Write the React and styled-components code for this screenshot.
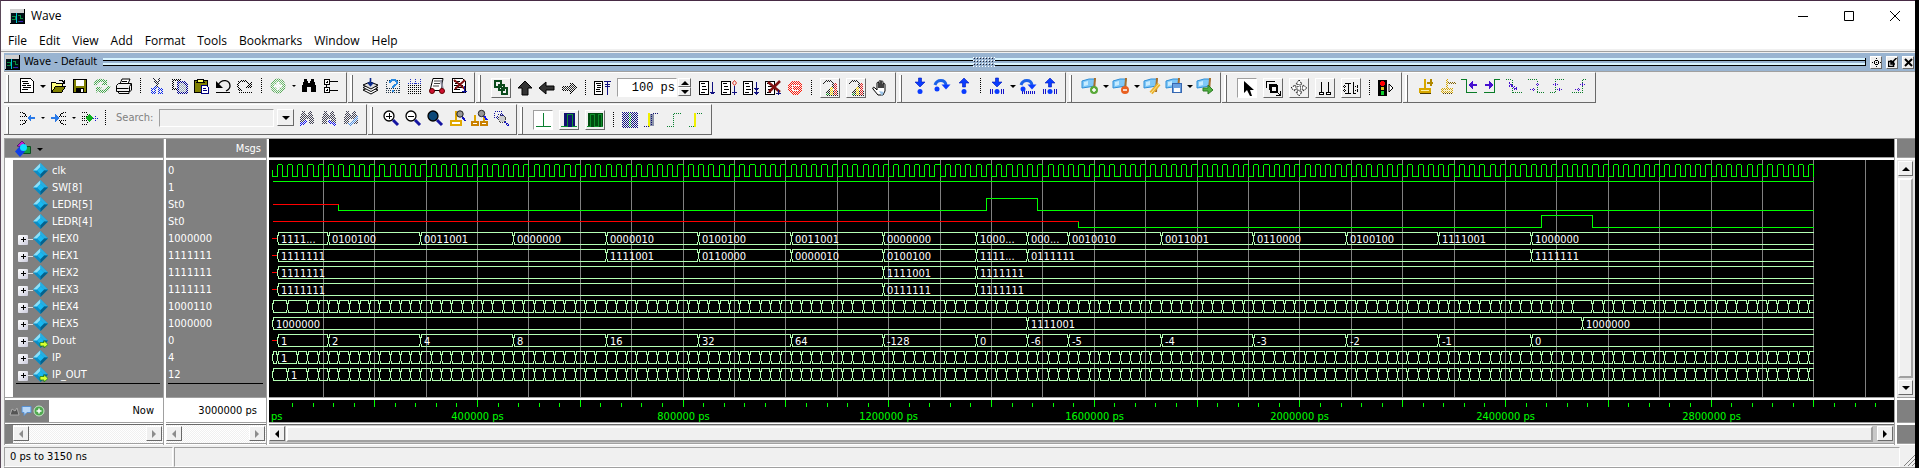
import React from "react";
import styled, { createGlobalStyle } from "styled-components";

const GREY = "#808080";
const EDGE = "#a0a0a0";
const SHADOW = "#696969";
const FACE = "#f0f0f0";
const UI = `"DejaVu Sans Condensed", "DejaVu Sans", sans-serif`;
const MENU = `"Open Sans", "Noto Sans", sans-serif`;

const Global = createGlobalStyle`
  * { box-sizing: border-box; }
  body { margin: 0; background: #000; font-family: ${UI}; font-size: 11px; line-height: 16px; color: #000; }
  button, input { font: inherit; color: inherit; padding: 0; margin: 0; border: 0; border-radius: 0; }
  button { display: flex; align-items: center; justify-content: center; background: none; }
  ul { margin: 0; padding: 0; list-style: none; }
  svg { display: block; }
`;

/* ---------- window frame ---------- */

const Frame = styled.div`
  margin-right: 4px;
  background: ${FACE};
  border-top: 1px solid #472b45;
  border-left: 1px solid #5b4a5a;
  border-bottom: 1px solid ${SHADOW};
`;
const TitleBar = styled.header`
  display: flex;
  align-items: center;
  gap: 6px;
  height: 30px;
  padding-left: 9px;
  background: #fff;
  font: 12px/16px ${MENU};
`;
const Title = styled.h1`
  margin: 0 auto 0 0;
  font: inherit;
`;
const WindowButton = styled.button`
  width: 40px;
  height: 28px;
`;
const MenuBar = styled.nav`
  display: flex;
  height: 18px;
  padding-left: 1px;
  background: #fff;
`;
const MenuItem = styled.button`
  padding: 2px 6px 0;
  font: 12px/18px ${MENU};
`;
const Dock = styled.main`
  margin-top: 2px;
  padding: 1px 0 0 3px;
  border-top: 1px solid ${EDGE};
`;
const Caption = styled.div`
  display: flex;
  align-items: center;
  height: 19px;
  padding: 0 1px;
  background: #99b4d1;
  border-bottom: 1px solid ${EDGE};
`;
const CaptionTitle = styled.h2`
  margin: 0 6px 0 4px;
  font: 11px/16px ${UI};
`;
const Groove = styled.div`
  display: flex;
  flex: 1;
  align-items: center;
  justify-content: center;
  height: 8px;
  border-right: 1px solid #000;
  background: linear-gradient(
    #d8f4ff 0 2px, #000 2px 3px, #99b4d1 3px 5px, #d8f4ff 5px 7px, #000 7px 8px
  );
`;
const GrooveGrip = styled.span`
  width: 22px;
  height: 10px;
  background:
    conic-gradient(at 1px 1px, #99b4d1 75%, #fff 0) 0 0 / 4px 4px,
    #99b4d1;
  background:
    linear-gradient(#fff, #fff) 0 0 / 1px 1px,
    #99b4d1;
  background:
    conic-gradient(at 1px 1px, transparent 75%, #fff 0) 0 0 / 3px 3px,
    conic-gradient(at 1px 1px, transparent 75%, #223 0) 1px 1px / 3px 3px,
    #99b4d1;
`;
const CaptionButton = styled.button`
  width: 12px;
  height: 13px;
  margin-left: 4px;
  background: ${FACE};
  border: solid;
  border-width: 1px;
  border-color: #fff ${SHADOW} ${SHADOW} #fff;
`;

/* ---------- toolbars ---------- */

const ToolRow = styled.div`
  display: flex;
  gap: 1px;
  margin-top: 1px;
  &:first-of-type { margin-top: 0; }
`;
const Tools = styled.div`
  display: flex;
  align-items: center;
  height: 31px;
  padding: 0 4px ${(p) => (p.$tall ? 0 : 3)}px 12px;
  border-top: 1px solid #fff;
  border-right: 1px solid ${SHADOW};
  border-bottom: 1px solid ${SHADOW};
  background:
    linear-gradient(#fff, #fff) 2px 2px / 2px 26px no-repeat,
    linear-gradient(${SHADOW}, ${SHADOW}) 4px 2px / 1px 27px no-repeat;
`;
const Tool = styled.button`
  flex: none;
  width: 22px;
  height: 22px;
`;
const RaisedTool = styled.button`
  flex: none;
  width: 20px;
  height: 20px;
  margin: 0 3px;
  border: 1px solid;
  border-color: ${(p) => (p.$on ? `${EDGE} #fff #fff ${EDGE}` : `#fff ${SHADOW} ${SHADOW} #fff`)};
  background: ${(p) => (p.$on ? "#fff" : FACE)};
`;
const DropTool = styled.button`
  width: 9px;
  height: 22px;
  &::after {
    content: "";
    border: solid transparent;
    border-width: ${(p) => (p.disabled ? "2px 2px 0" : "3px 3px 0")};
    border-top-color: #000;
  }
`;
const Divider = styled.span`
  width: 1px;
  height: 16px;
  margin: 0 5px;
  background: repeating-linear-gradient(#000 0 1px, transparent 1px 2px);
`;
const SearchLabel = styled.label`
  margin-left: 5px;
  color: #808080;
  font-size: 11px;
`;
const SearchBox = styled.div`
  display: flex;
  justify-content: space-between;
  width: 135px;
  margin: 0 2px 0 6px;
`;
const SearchInput = styled.input`
  width: 115px;
  height: 18px;
  background: ${FACE};
  border: 1px solid;
  border-color: ${EDGE} #fff #fff ${EDGE};
`;
const SearchDrop = styled.button`
  width: 17px;
  height: 17px;
  border: 1px solid;
  border-color: #fff ${SHADOW} ${SHADOW} #fff;
`;
const TimeBox = styled.div`
  display: flex;
  gap: 1px;
  margin: 0 5px 0 4px;
`;
const TimeInput = styled.input`
  width: 60px;
  height: 19px;
  padding-right: 1px;
  text-align: right;
  font: 12px "Liberation Mono", monospace;
  background: #fff;
  border: 1px solid;
  border-color: ${EDGE} #fff #fff ${EDGE};
`;
const Spinner = styled.div`
  display: flex;
  flex-direction: column;
`;
const SpinButton = styled.button`
  width: 13px;
  height: 9px;
  border: 1px solid;
  border-color: #fff ${SHADOW} ${SHADOW} #fff;
`;
const Arrow = styled.span`
  border: 4px solid transparent;
  ${(p) => p.$up && "border-top-width: 0; border-bottom-color: currentColor;"}
  ${(p) => p.$down && "border-bottom-width: 0; border-top-color: currentColor;"}
  ${(p) => p.$left && "border-left-width: 0; border-right-color: currentColor;"}
  ${(p) => p.$right && "border-right-width: 0; border-left-color: currentColor;"}
`;

/* ---------- wave panes ---------- */

const Panes = styled.section`
  display: flex;
  margin-top: 3px;
  border-top: 1px solid ${EDGE};
  border-left: 1px solid ${EDGE};
  background: #fff;
`;
const Pane = styled.div`
  display: flex;
  flex-direction: column;
  flex: ${(p) => (p.$w ? `0 0 ${p.$w}px` : "1 1 0")};
  min-width: 0;
  border-right: ${(p) => (p.$last ? 0 : 1)}px solid ${EDGE};
  margin-right: ${(p) => (p.$last ? 0 : 2)}px;
`;
const Cell = styled.div`
  display: flex;
  align-items: center;
  height: ${(p) => p.$h}px;
  margin-bottom: 2px;
  background: ${(p) => p.$bg || GREY};
  box-shadow: 0 1px 0 ${EDGE};
  & + & { margin-top: 1px; }
  color: ${(p) => p.$fg || "#fff"};
  justify-content: ${(p) => (p.$end ? "flex-end" : "flex-start")};
  padding: ${(p) => p.$top || 0}px ${(p) => p.$end || 0}px 0 0;
`;
const Body = styled.div`
  height: 237px;
  margin: 1px 0 3px;
  padding: ${(p) => (p.$flush ? 0 : `2px 3px 0 ${p.$pad}px`)};
  border-left: ${(p) => p.$gutter || 0}px solid #fff;
  background: ${(p) => (p.$flush ? "#000" : GREY)};
  color: #fff;
  box-shadow: 0 1px 0 ${EDGE};
`;
const SignalList = styled.ul`
  border-bottom: 1px solid #000;
`;
const Signal = styled.li`
  display: flex;
  align-items: center;
  height: 17px;
  white-space: nowrap;
`;
const Expander = styled.button`
  width: 10px;
  height: 10px;
  margin: 2px 0 0 2px;
  background: linear-gradient(135deg, #fff, #ccd);
  border-radius: 1px;
`;
const Stem = styled.span`
  width: 5px;
  height: 1px;
  margin: 2px 0 0 0;
  background: ${(p) => (p.$blank ? "transparent" : "#ddd")};
`;
const Blank = styled.span`
  width: 12px;
`;
const SignalName = styled.span`
  margin-left: 4px;
`;
const NowIcons = styled.div`
  display: flex;
  align-items: center;
  justify-content: center;
  align-self: stretch;
  width: 44px;
  margin-right: auto;
  background: ${GREY};
`;
const HScroll = styled.div`
  display: flex;
  height: 20px;
  padding: 1px 1px 1px 0;
  border-top: 1px solid ${SHADOW};
  border-bottom: 1px solid ${EDGE};
  border-left: ${(p) => p.$gutter || 0}px solid ${GREY};
  background: ${(p) => (p.$idle ? "repeating-conic-gradient(#fff 0 25%, #f0f0f0 0 50%) 0 0 / 2px 2px" : "#c8c8c8")};
`;
const ScrollButton = styled.button`
  flex: none;
  width: 16px;
  height: 15px;
  color: ${(p) => (p.disabled ? "#8c8c8c" : "#000")};
  background: ${FACE};
  border: 1px solid;
  border-color: #fff ${SHADOW} ${SHADOW} #fff;
`;
const Thumb = styled.div`
  flex: 1;
  margin: ${(p) => (p.$v ? "2px 0" : "0 4px 0 1px")};
  background: ${(p) => (p.$clear ? "none" : FACE)};
  border: ${(p) => (p.$clear ? 0 : 2)}px solid;
  border-color: #fff ${EDGE} ${EDGE} #fff;
`;
const VScroll = styled.div`
  display: flex;
  flex-direction: column;
  align-items: stretch;
  height: 237px;
  margin: 1px 0 3px;
  padding: 1px 2px 2px 1px;
  background: #e3e3e3;
  box-shadow: 0 1px 0 ${EDGE};
  button { width: auto; }
`;
const StatusBar = styled.footer`
  display: flex;
  gap: 1px;
  height: 21px;
  margin-top: 2px;
  border-bottom: 1px solid ${EDGE};
`;
const StatusCell = styled.div`
  flex: ${(p) => (p.$w ? `0 0 ${p.$w}px` : "1")};
  padding: 1px 0 0 5px;
  border: 1px solid;
  border-color: ${EDGE} #fff #fff ${EDGE};
`;

/* ---------- icons ---------- */

const Glyph = ({ name, dim }) => (
  <svg width="18" height="18" viewBox="1 1 18 18" shapeRendering="crispEdges" fill="none" aria-hidden="true">
    <g mask={dim ? "url(#stipple)" : undefined}>{glyphs[name]}</g>
  </svg>
);

const Defs = styled.svg`
  position: absolute;
`;
const Stipple = () => (
  <Defs width="0" height="0" aria-hidden="true">
    <defs>
      <pattern id="checks" width="2" height="2" patternUnits="userSpaceOnUse">
        <rect width="1" height="1" fill="#fff" />
        <rect x="1" y="1" width="1" height="1" fill="#fff" />
      </pattern>
      <mask id="stipple" maskUnits="userSpaceOnUse" x="0" y="0" width="20" height="20">
        <rect width="20" height="20" fill="url(#checks)" />
      </mask>
    </defs>
  </Defs>
);

const page = (
  <>
    <path d="M3.500 2.500h10l3 3v11h-13z" fill="#fff" stroke="#000" />
    <path d="M5 5.500h6M6 7.500h6M5 9.500h4M10 9.500h4M6 11.500h8M5 13.500h6" stroke="#000" />
  </>
);
const magnifier = (fill) => (
  <>
    <path d="M12 12l5 5" stroke="#1414a0" strokeWidth="3" shapeRendering="auto" />
    <circle cx="8" cy="8" r="5" fill={fill} stroke="#000" strokeWidth="1.3" shapeRendering="auto" />
  </>
);
const binoculars = (c) => (
  <path fill={c} d="M5 3h3v2h1v2h2V5h1V3h3v3h1v3h1v7h-5v-5H8v5H3V9h1V6h1z" />
);
const flag = (
  <g shapeRendering="auto">
    <path d="M2 5l7-2 6 0-1 7-5 1-7 1z" fill="#7fc8f8" stroke="#2f8fd8" />
    <path d="M4 6l4-1v4l-4 1z" fill="#c9ecff" />
    <path d="M15 2l-1 14" stroke="#a8702c" strokeWidth="2" />
  </g>
);
const downArrow = (y) => (
  <g shapeRendering="auto" fill="#0a3cff" stroke="#0016b8" strokeWidth=".6">
    <path d={`M8.500 ${y}h3v4h3.500l-5 5-5-5h3.500z`} />
  </g>
);
const overArrow = (
  <g shapeRendering="auto">
    <path d="M3 9c2-6 10-6 11 0" stroke="#1b62e8" strokeWidth="3" />
    <path d="M9.500 8.500h9l-4.500 5z" fill="#0a3cff" />
    <circle cx="5" cy="13" r="2.500" fill="#0a3cff" />
  </g>
);
const upArrow = (y) => (
  <path d={`M8.500 ${y + 9}h3v-4h3.500l-5-5-5 5h3.500z`} fill="#0a3cff" stroke="#0016b8" strokeWidth=".6" shapeRendering="auto" />
);
const comb = <path d="M3.500 13v5M5.500 13v5M14.500 13v5M16.500 13v5" stroke="#1414c8" />;
const dot = <circle cx="10" cy="15.500" r="2.500" fill="#0a3cff" shapeRendering="auto" />;
const cursorBase = (s) => (
  <>
    <path d="M8 3h2v9H8z" fill={s} />
    <path d="M3.500 12.500h10v3h-10z" fill="#fff0a0" stroke={s} strokeWidth="2" />
    <path d="M4 17.500h11" stroke="#503c00" />
  </>
);
const blueHead = "#4610d0";

const glyphs = {
  new: page,
  open: (
    <>
      <path d="M3.500 15.500v-9h4l1 1h6v3" fill="#ffff80" stroke="#000" />
      <path d="M3.500 16.500l4-6h10l-4 6z" fill="#808000" stroke="#000" />
      <path d="M11 4.500h3l2 2M16.500 4v4M14 7.500h3" stroke="#000" />
    </>
  ),
  save: (
    <>
      <path d="M3.500 3.500h13v13h-13z" fill="#808000" stroke="#000" />
      <path d="M6 4h8v6H6z" fill="#fff" />
      <path d="M6 12h8v5H6z" fill="#000" />
      <path d="M11 13h2v3h-2z" fill="#fff" />
    </>
  ),
  reload: (
    <g shapeRendering="auto">
      <path d="M3 9c1-5 7-6 10-3" stroke="#3fa648" strokeWidth="3" />
      <path d="M15 3v6H9z" fill="#3fa648" />
      <path d="M17 10c-1 5-7 7-10 4" stroke="#3fa648" strokeWidth="3" />
      <path d="M4 17v-6h6z" fill="#3fa648" />
    </g>
  ),
  print: (
    <g shapeRendering="auto" stroke="#000">
      <path d="M6 8l2-5h8l-2 5" fill="#fff" />
      <path d="M2.500 9.500l2-2h13l-2 3v5h-13z" fill="#eee" />
      <path d="M2.500 12.500h12M4 15.500h11v2H5zM17.500 8v6l-2 2M8 5.500h5" />
    </g>
  ),
  cut: (
    <>
      <path d="M7 2l4 9M13 2L9 11" stroke="#223" strokeWidth="2" />
      <path d="M5 13h3v4H5zM12 13h3v4h-3zM9 11l-3 3M11 11l3 3" stroke="#0a2af0" strokeWidth="2" />
    </>
  ),
  copy: (
    <>
      <path d="M3.500 3.500h7v9h-7z" stroke="#000" strokeWidth="2" />
      <path d="M9 6h6l3 3v8H9z" fill="#9ab" stroke="#000090" strokeWidth="2" />
    </>
  ),
  paste: (
    <>
      <path d="M3 4h13v12H3z" fill="#808000" stroke="#000" />
      <path d="M6 6l1-3h5l1 3z" fill="#ffff60" stroke="#000" />
      <path d="M10.500 9.500h5l2 2v6h-7z" fill="#fff" stroke="#000080" />
      <path d="M12 12.500h3M12 14.500h4" stroke="#000080" />
    </>
  ),
  undo: (
    <g shapeRendering="auto">
      <path d="M5 9c4-7 12-5 12 1 0 3-2 4-4 5" stroke="#000" strokeWidth="1.300" />
      <path d="M3 5v7h7z" fill="#000" />
      <path d="M3 16.500h14" stroke="#000" />
    </g>
  ),
  redo: (
    <>
      <path d="M15 9C11 2 3 4 3 10c0 3 2 4 4 5" stroke="#000" strokeWidth="2" />
      <path d="M17 5v7h-7z" fill="#000" />
      <path d="M3 16.500h14" stroke="#000" />
    </>
  ),
  addGreen: (
    <g shapeRendering="auto">
      <circle cx="10" cy="10" r="7" fill="#6fc070" stroke="#3a9a3c" />
      <path d="M10 6v8M6 10h8" stroke="#fff" strokeWidth="3" />
    </g>
  ),
  find: binoculars("#000"),
  tree: (
    <>
      <path d="M3.500 3.500h5v5h-5zM3.500 11.500h5v5h-5z" fill="#fff" stroke="#000" />
      <path d="M5 6h2M6 5v2M5 14h2M6 13v2M9 5.500h8M9 14.500h8M5.500 9v3" stroke="#000" />
    </>
  ),
  compile: (
    <g shapeRendering="auto" stroke="#000">
      <path d="M2 14l7-3 8 3-7 4z" fill="#fff" />
      <path d="M2 11.500l7-3 8 3-7 4z" fill="#fff" />
      <path d="M2 9l7-3 8 3-7 4z" fill="#ddd" />
      <path d="M9.500 2v7M7 6.500l2.500 3 2.500-3" stroke="#0a2a90" strokeWidth="1.600" />
    </g>
  ),
  compileAsk: (
    <>
      <path d="M3.500 4.500h13v12h-13z" stroke="#234" strokeDasharray="1 1" />
      <path d="M5 14.500h11M4 12.500h12" stroke="#234" strokeDasharray="1 1" />
      <path d="M7 7c0-4 7-4 7 0 0 2-4 2-4 5M10 14v2" stroke="#2a8ae0" strokeWidth="2" />
    </>
  ),
  compileAll: (
    <>
      <path d="M3 9.500h14M3 11.500h14M3 13.500h14M3 15.500h14M3 17.500h14" stroke="#000" strokeDasharray="1 1" />
      <path d="M5.500 3v6M10.500 3v6M15.500 3v6M3 7.500h14" stroke="#2030c0" strokeDasharray="1 1" />
    </>
  ),
  simulate: (
    <g shapeRendering="auto">
      <path d="M6 2.500h10l-2 12H3z" fill="#fff" stroke="#000" />
      <path d="M7 5h6M7 7.500h6M6 10h6" stroke="#444" />
      <path d="M14 4l2 11" stroke="#889" strokeWidth="2" />
      <circle cx="5" cy="15" r="2.500" fill="#d01030" stroke="#600" />
      <circle cx="15" cy="15" r="2.500" fill="#d01030" stroke="#600" />
    </g>
  ),
  endSim: (
    <>
      {page}
      <path d="M5 4l11 9M16 4L6 13" stroke="#801010" strokeWidth="2" shapeRendering="auto" />
      <path d="M15.500 10v7M13 15.500h5" stroke="#1414a0" />
    </>
  ),
  hierarchy: (
    <path d="M4 3h6v6H4zM8 7h5v5H8zM11 10h5v6h-5z" stroke="#0a4a1c" strokeWidth="2" />
  ),
  up: <path d="M10 3l7 7h-4v7H7v-7H3z" fill="#333" stroke="#000" shapeRendering="auto" />,
  left: <path d="M2 10l7-6v4h8v4H9v4z" fill="#333" stroke="#000" shapeRendering="auto" />,
  right: <path d="M18 10l-7-6v4H3v4h8v4z" fill="#333" stroke="#000" />,
  restart: (
    <>
      <path d="M2.500 3.500h8v13h-8z" fill="#fff" stroke="#000" />
      <path d="M4 5.500h5M5 7.500h4M5 9.500h4M4 11.500h4M4 13.500h5" stroke="#000" />
      <path d="M15.500 4v13M12 3.500h7M13 6.500h5M13 8.500h5" stroke="#101080" />
    </>
  ),
  run: (
    <>
      <path d="M2.500 3.500h9v13h-9z" fill="#fff" stroke="#000" />
      <path d="M4 5.500h4M5 8.500h4M5 11.500h5M4 14.500h4" stroke="#000" />
      <path d="M15.500 4v12M13 14.500h5M14 15.500h3" stroke="#101080" />
    </>
  ),
  runDiamond: (
    <>
      <path d="M2.500 3.500h9v13h-9z" fill="#fff" stroke="#000" />
      <path d="M4 5.500h4M5 8.500h4M5 11.500h5M4 14.500h4" stroke="#000" />
      <path d="M15.500 8v9M13 14.500h5" stroke="#101080" />
      <path d="M15.500 2.500l2 2.500-2 2.500-2-2.500z" stroke="#e03020" shapeRendering="auto" />
    </>
  ),
  runAll: (
    <>
      <path d="M2.500 3.500h9v13h-9z" fill="#fff" stroke="#000" />
      <path d="M4 5.500h4M5 8.500h4M5 11.500h5M4 14.500h4" stroke="#000" />
      <path d="M15.500 4v13M13 10.500h5M13 14.500h5M14 11.500h3M14 15.500h3" stroke="#101080" />
    </>
  ),
  breakRun: (
    <>
      <path d="M2.500 3.500h9v13h-9z" fill="#fff" stroke="#000" />
      <path d="M4 5.500h4M5 8.500h4M5 11.500h5M4 14.500h4" stroke="#000" />
      <path d="M5 4l12 10M17 3L6 14" stroke="#801010" strokeWidth="2.500" shapeRendering="auto" />
      <path d="M15.500 12v5M13 15.500h5" stroke="#101080" />
    </>
  ),
  stop: (
    <>
      <path d="M7 3h7l3 4v6l-3 4H7l-4-4V7z" fill="#ff1808" />
      <path d="M7 7.500h7M7 12.500h7M7 8v4" stroke="#fff" />
    </>
  ),
  profile: (
    <>
      <path d="M3 6l3-3h5l3 4-3 5H8" stroke="#222" strokeWidth="2" />
      <path d="M6 13h12v5H6z" fill="#222" />
      <path d="M10 9h3v8h-3z" fill="#f0d000" />
      <path d="M14 5h3v12h-3z" fill="#e02020" />
      <path d="M6 15h3v2H6z" fill="#10a020" />
    </>
  ),
  hand: (
    <g shapeRendering="auto">
      <path d="M8 17l-5-6c-1-2 1-2 2-1l2 2V5c0-1 2-1 2 0v5V4c0-2 2-2 2 0v6V4c0-2 2-1 2 0v6V6c1-1 2-1 2 1v6l-2 4z" fill="#fff" stroke="#000" />
      <path d="M9 13l5 1-2 4z" fill="#9cc4e8" />
    </g>
  ),
  stepIn: (<>{downArrow(2)}{dot}</>),
  stepOver: overArrow,
  stepOut: (<>{upArrow(2)}{dot}</>),
  stepInAll: (<>{downArrow(2)}{dot}{comb}</>),
  stepOverAll: (<>{overArrow}<path d="M4 16.500h14" stroke="#1414c8" strokeWidth="3" strokeDasharray="1 1" /></>),
  stepOutAll: (<>{upArrow(2)}{dot}{comb}</>),
  flagAdd: (
    <g shapeRendering="auto">
      {flag}
      <circle cx="14" cy="14" r="4" fill="#58a838" />
      <path d="M14 12v4M12 14h4" stroke="#fff" strokeWidth="1.500" />
    </g>
  ),
  flagRemove: (
    <g shapeRendering="auto">
      {flag}
      <circle cx="14" cy="14" r="4" fill="#e86020" />
      <path d="M12 14h4" stroke="#fff" strokeWidth="1.500" />
    </g>
  ),
  flagEdit: (<g shapeRendering="auto">{flag}<path d="M17 8l-8 9" stroke="#e8b030" strokeWidth="4" /><path d="M17 8l-8 9" stroke="#ffe890" /></g>),
  flagSave: (<g>{flag}<path d="M8.500 7.500h9v9h-9z" fill="#6aa0e0" stroke="#3868b0" /><path d="M10 12h6v4h-6z" fill="#fff" /></g>),
  flagGo: (<g shapeRendering="auto">{flag}<path d="M8 12h5V9l5 5-5 4v-3H8z" fill="#50b040" stroke="#2c7c24" /></g>),
  pointer: <path d="M7 3v12l3-3 3 6h2l-2-6h4z" fill="#000" shapeRendering="auto" />,
  zoomMode: (
    <>
      <path d="M3.500 10v-6.500h8M6 12v-5.500h8" stroke="#000" />
      <path d="M8 8h6v6H8z" stroke="#000" strokeWidth="2" />
      <path d="M14 14l3 3M17 13v4h-4" stroke="#000" />
    </>
  ),
  panMode: (
    <g stroke="#000" shapeRendering="auto" strokeDasharray="1.400 1">
      <path d="M10 2l3 4h-2v3h3V7l4 3-4 3v-2h-3v3h2l-3 4-3-4h2v-3H6v2l-4-3 4-3v2h3V6H7z" fill="#fff" />
    </g>
  ),
  twoCursor: (
    <>
      <path d="M6.500 4v11M13.500 4v11" stroke="#000" />
      <path d="M4.500 14.500h4v2h-4zM11.500 14.500h4v2h-4z" fill="#fff" stroke="#000" />
    </>
  ),
  editMode: (
    <>
      <path d="M4 5.500h6M7.500 5v11M4 15.500h6M12.500 4v12M12 15.500h3" stroke="#000" />
      <path d="M2 8.500h4M2 12.500h4M14 8.500h4M14 12.500h4M3.500 7v3M3.500 11v3M16.500 7v3M16.500 11v3" stroke="#000" strokeDasharray="1 1" />
    </>
  ),
  traffic: (
    <>
      <path d="M2 2h9v16H2z" fill="#000" />
      <circle cx="6.500" cy="5.500" r="2.600" fill="#f00" />
      <circle cx="6.500" cy="10.500" r="1.500" fill="#d8c820" />
      <circle cx="6.500" cy="15" r="2" fill="#10d030" />
      <path d="M13 6v8l4-4z" fill="#fff" stroke="#000" shapeRendering="auto" />
    </>
  ),
  cursorAdd: (<>{cursorBase("#d8a800")}<path d="M11 6.500h6M14.500 3v7" stroke="#b08800" strokeWidth="2" /></>),
  cursorDel: (<>{cursorBase("#d8a800")}<path d="M10 6.500h8" stroke="#806000" strokeWidth="2" /></>),
  edgePrev: (
    <>
      <path d="M1 3.500h5.500v13H17" stroke="#0a7c28" />
      <path d="M8 9l5-4v3h4v2h-4v3z" fill={blueHead} />
    </>
  ),
  edgeNext: (
    <>
      <path d="M2 16.500h10.500v-13H18" stroke="#0a7c28" />
      <path d="M12 9L7 5v3H3v2h4v3z" fill={blueHead} />
    </>
  ),
  fallPrev: (
    <>
      <path d="M2 3.500h6v13h10" stroke="#0a7c28" strokeDasharray="1 1" />
      <path d="M5 7l8 6M5 9.500h4M10 12.500h4" stroke={blueHead} strokeDasharray="1 1" strokeWidth="2" />
    </>
  ),
  fallNext: (
    <>
      <path d="M2 3.500h9v13h8" stroke="#0a7c28" strokeDasharray="1 1" />
      <path d="M10 8.500h4M4 13.500h5M11.500 7v4M7.500 12v3" stroke={blueHead} strokeDasharray="1 1" />
    </>
  ),
  risePrev: (
    <>
      <path d="M2 16.500h5v-13h10" stroke="#0a7c28" strokeDasharray="1 1" />
      <path d="M5 8.500h5M9 13.500h5M7.500 7v4M11.500 12v3" stroke={blueHead} strokeDasharray="1 1" />
    </>
  ),
  riseNext: (
    <>
      <path d="M2 16.500h10v-13h5" stroke="#0a7c28" strokeDasharray="1 1" />
      <path d="M10 8.500h5M5 13.500h5M12.500 7v4M8.500 12v3" stroke={blueHead} strokeDasharray="1 1" />
    </>
  ),
  joinLeft: (
    <>
      <path d="M3 4.500h3l5 5M3 16.500h3l5-5M3 8.500h6M3 12.500h6" stroke="#000" strokeDasharray="1 1" />
      <path d="M10 10l4-4v3h4v2h-4v3z" fill="#2a7ae8" />
    </>
  ),
  joinRight: (
    <>
      <path d="M18 4.500h-3l-5 5M18 16.500h-3l-5-5M18 8.500h-6M18 12.500h-6" stroke="#000" strokeDasharray="1 1" />
      <path d="M11 10L7 6v3H3v2h4v3z" fill="#2a7ae8" />
    </>
  ),
  joinBoth: (
    <>
      <path d="M3 4.500h4l3 3M3 16.500h4l3-3M3 8.500h5M3 10.500h4M3 12.500h5" stroke="#000" strokeDasharray="1 1" />
      <path d="M10 6l4 4-4 4-4-4z" fill="#10b020" />
      <path d="M14 10.500h5M16.500 8v5" stroke="#1414d0" strokeDasharray="1 1" />
    </>
  ),
  findPrev: (<>{binoculars("#445")}<path d="M3 17l7-4" stroke="#1414f0" strokeWidth="3" /></>),
  findNext: (<>{binoculars("#445")}<path d="M9 13l8 4" stroke="#1414f0" strokeWidth="3" /></>),
  findOpts: (<>{binoculars("#445")}<path d="M8 17l9-8" stroke="#4a90e8" strokeWidth="3" /></>),
  zoomIn: (<>{magnifier("#fff")}<path d="M5 8.500h6M8.500 5v6" stroke="#000" /></>),
  zoomOut: (<>{magnifier("#fff")}<path d="M5 8.500h6" stroke="#000" /></>),
  zoomFull: magnifier("#0c4878"),
  zoomCursor: (
    <>
      <path d="M3.500 12.500h10v4h-10z" fill="#fff" stroke="#e0a800" strokeWidth="2" />
      <path d="M8.500 3v9" stroke="#e0a800" strokeWidth="2" />
      <path d="M15 8l3 5" stroke="#1414c0" strokeWidth="2" />
      <circle cx="13" cy="6" r="3.200" fill="#999" stroke="#222" shapeRendering="auto" />
    </>
  ),
  zoomCursors: (
    <>
      <path d="M2.500 13.500h6v3h-6zM11.500 13.500h6v3h-6z" fill="#fff" stroke="#c88000" strokeWidth="2" />
      <path d="M5.500 7v6M14.500 9v4" stroke="#e0a800" strokeWidth="2" />
      <path d="M15 8l3 4" stroke="#1414f0" strokeWidth="2" />
      <circle cx="12.500" cy="5.500" r="3.200" fill="#999" stroke="#222" shapeRendering="auto" />
    </>
  ),
  zoomOther: (
    <>
      <path d="M3.500 3.500h7v6h-7zM6.500 6.500h6v4h-6z" stroke="#1414a0" strokeDasharray="1 1" />
      <circle cx="11" cy="11" r="3.500" fill="#ccc" stroke="#444" strokeDasharray="1 1" />
      <path d="M14 14l4 4" stroke="#1414c0" strokeWidth="2" strokeDasharray="1 1" />
    </>
  ),
  waveCursor: <path d="M10.500 3v14M3 16.500h15" stroke="#0a8030" />,
  wavePulse: (
    <>
      <path d="M5 3h11v14H5z" fill="#101070" />
      <path d="M2 16.500h6v-12h5v12h5" stroke="#0a9030" />
    </>
  ),
  waveDense: (
    <>
      <path d="M3 3h15v14H3z" fill="#004c10" />
      <path d="M2 16.500h3v-12h4v12h4v-12h3v12h2" stroke="#10902c" />
    </>
  ),
  gridBlue: (<><path d="M2 2h16v16H2z" fill="#101080" /><path d="M10 3v14" stroke="#10a030" strokeWidth="2" /></>),
  edgeYellow: (
    <>
      <path d="M6 3h2v14H6z" fill="#f0f000" />
      <path d="M8 4h4v12H8z" fill="#8890a8" />
      <path d="M2 16.500h5M11 3.500h6M9.500 4v12" stroke="#101070" strokeDasharray="1 1" />
    </>
  ),
  edgeRise: <path d="M3 16.500h6v-13h8" stroke="#0a8030" strokeDasharray="1 1" />,
  edgeRiseYellow: (
    <>
      <path d="M8 3h2v14H8z" fill="#f0f000" />
      <path d="M3 16.500h6M11 3.500h6" stroke="#0a8030" strokeDasharray="1 1" />
    </>
  ),
};

const AppIcon = () => (
  <svg width="15" height="15" viewBox="0 0 15 15" shapeRendering="crispEdges" aria-hidden="true">
    <path d="M0 0h15v15H0z" fill="#d0d0d0" />
    <path d="M14 0h1v15H0v-1h14z" fill="#000" />
    <path d="M1 4h13v10H1z" fill="#001018" />
    <path d="M2 7.500h3v3h-3M8 6.500h3M10 6v3h3M8 12.500h5" stroke="#0a8c40" fill="none" />
    <path d="M6 4v10" stroke="#00c8d8" />
    <path d="M9 12.500h4" stroke="#4020c0" />
  </svg>
);

const Diamond = ({ out }) => (
  <svg width="15" height="15" viewBox="0 0 15 15" aria-hidden="true">
    <path d="M7.500 0L15 7.500 7.500 15 0 7.500z" fill="#0a8cc4" />
    <path d="M7.500 0v4L4 7.500H0z" fill="#8fe0f8" />
    <path d="M7.500 0L15 7.500h-4L7.500 4z" fill="#28aee0" />
    <path d="M15 7.500L7.500 15v-4L11 7.500z" fill="#04618c" />
    <path d="M7.500 4L11 7.500 7.500 11 4 7.500z" fill="#18b8f0" />
    {out && <path d="M7 9.500h4V7.500l4 4-4 3.500v-2H7z" fill="#d8ff30" stroke="#208020" strokeWidth=".8" />}
  </svg>
);

const ObjectsIcon = () => (
  <svg width="17" height="16" viewBox="0 0 17 16" aria-hidden="true">
    <path d="M2 5l5-5 3 3-3 3z" fill="#c020d0" stroke="#401060" strokeWidth=".8" />
    <path d="M8.500 5.500h7v7h-7z" fill="#18a040" stroke="#0a5020" />
    <path d="M5 5l5 5.500L5 16 0 10.500z" fill="#1040e8" />
    <circle cx="8.500" cy="6.500" r="3.500" fill="#10e0ff" />
  </svg>
);

/* ---------- toolbar contents ---------- */

const rows = [
  [
    { items: ["new", "v", "open", "save", "reload~", "print", "|", "cut~", "copy~", "paste", "undo", "redo~", "|", "addGreen~", "v~", "find", "tree"] },
    { items: ["compile", "compileAsk", "compileAll", "simulate", "endSim"] },
    { tall: true, items: ["#hierarchy", "up", "left", "right~", "|", "restart", "@time", "run", "runDiamond", "runAll", "breakRun", "stop~", "|", "#profile~", "#profile~", "hand"] },
    { items: ["stepIn", "stepOver", "stepOut", "|", "stepInAll", "v", "stepOverAll", "stepOutAll"] },
    { items: ["flagAdd", "v", "flagRemove", "v", "flagEdit", "flagSave", "v", "flagGo"] },
    { tall: true, items: ["!pointer", "#zoomMode", "#panMode", "#twoCursor", "#editMode", "|", "traffic"] },
    { items: ["cursorAdd", "cursorDel~", "edgePrev", "edgeNext", "fallPrev", "fallNext", "risePrev", "riseNext"] },
  ],
  [
    { items: ["joinLeft", "v~", "joinRight", "v~", "joinBoth", "|", "@search", "findPrev~", "findNext~", "findOpts~"] },
    { items: ["zoomIn", "zoomOut", "zoomFull", "zoomCursor", "zoomCursors", "zoomOther"] },
    { tall: true, items: ["!waveCursor", "#wavePulse", "#waveDense", "|", "gridBlue~", "edgeYellow", "edgeRise", "edgeRiseYellow"] },
  ],
];

const RunLength = () => (
  <TimeBox>
    <TimeInput aria-label="Run length" defaultValue="100 ps" />
    <Spinner>
      <SpinButton aria-label="Increase"><Arrow $up /></SpinButton>
      <SpinButton aria-label="Decrease"><Arrow $down /></SpinButton>
    </Spinner>
  </TimeBox>
);

const Search = () => (
  <>
    <SearchLabel htmlFor="search">Search:</SearchLabel>
    <SearchBox>
      <SearchInput id="search" disabled />
      <SearchDrop aria-label="Search history"><Arrow $down /></SearchDrop>
    </SearchBox>
  </>
);

const ToolItem = ({ code }) => {
  const dim = code.endsWith("~");
  const base = dim ? code.slice(0, -1) : code;
  if (base === "|") return <Divider />;
  if (base === "v") return <DropTool disabled={dim} aria-label="More" />;
  if (base === "@time") return <RunLength />;
  if (base === "@search") return <Search />;
  if (base[0] === "#" || base[0] === "!") {
    const name = base.slice(1);
    return (
      <RaisedTool $on={base[0] === "!"} disabled={dim} aria-label={name}>
        <Glyph name={name} dim={dim} />
      </RaisedTool>
    );
  }
  return (
    <Tool disabled={dim} aria-label={base}>
      <Glyph name={base} dim={dim} />
    </Tool>
  );
};

/* ---------- signals; all times in ns ---------- */

const END = 3000;
const every = (from, to, skip = []) => {
  const out = [];
  for (let t = from; t < to; t += 20) if (!skip.includes(t)) out.push([t, ""]);
  return out;
};

const signals = [
  { name: "clk", value: "0", clock: true },
  { name: "SW[8]", value: "1", levels: [[0, 1]] },
  { name: "LEDR[5]", value: "St0", levels: [[0, "x"], [130, 0], [1390, 1], [1490, 0]] },
  { name: "LEDR[4]", value: "St0", levels: [[0, "x"], [1570, 0], [2470, 1], [2570, 0]] },
  {
    name: "HEX0", value: "1000000",
    bus: [[10, "1111..."], [110, "0100100"], [290, "0011001"], [470, "0000000"], [650, "0000010"], [830, "0100100"], [1010, "0011001"], [1190, "0000000"], [1370, "1000..."], [1470, "000..."], [1550, "0010010"], [1730, "0011001"], [1910, "0110000"], [2090, "0100100"], [2270, "1111001"], [2450, "1000000"]],
  },
  {
    name: "HEX1", value: "1111111",
    bus: [[10, "1111111"], [650, "1111001"], [830, "0110000"], [1010, "0000010"], [1190, "0100100"], [1370, "1111..."], [1470, "0111111"], [2450, "1111111"]],
  },
  { name: "HEX2", value: "1111111", bus: [[10, "1111111"], [1190, "1111001"], [1370, "1111111"]] },
  { name: "HEX3", value: "1111111", bus: [[10, "1111111"], [1190, "0111111"], [1370, "1111111"]] },
  { name: "HEX4", value: "1000110", bus: [[0, ""], [30, ""], ...every(70, END, [2550])] },
  { name: "HEX5", value: "1000000", bus: [[0, "1000000"], [1470, "1111001"], [2550, "1000000"]] },
  {
    name: "Dout", value: "0", out: true,
    bus: [[10, "1"], [110, "2"], [290, "4"], [470, "8"], [650, "16"], [830, "32"], [1010, "64"], [1190, "-128"], [1370, "0"], [1470, "-6"], [1550, "-5"], [1730, "-4"], [1910, "-3"], [2090, "-2"], [2270, "-1"], [2450, "0"]],
  },
  { name: "IP", value: "4", bus: [[0, ""], [10, "1"], ...every(50, END)] },
  { name: "IP_OUT", value: "12", out: true, bus: [[0, ""], [30, "1"], ...every(70, END)] },
];

const px = (t) => Math.max(3, Math.round(2.4 + t * 0.514)) + 0.5;
const range = (from, to, step) => Array.from({ length: Math.floor((to - from) / step) + 1 }, (_, i) => from + i * step);

const clockPath = (y) => {
  let d = `M${px(0)} ${y + 8}V${y + 14.5}`;
  for (let t = 10; t < END; t += 20) {
    const a = px(t);
    const b = px(t + 10);
    d += `H${a}V${y + 3}M${a + 0.5} ${y + 2.5}H${b - 0.5}M${b} ${y + 3}V${y + 14.5}`;
  }
  return d;
};

const Levels = ({ y, levels }) => {
  const at = { 0: y + 14.5, 1: y + 2.5, x: y + 8.5 };
  return levels.map(([t, v], i) => {
    const end = levels[i + 1] ? levels[i + 1][0] : END;
    const from = i ? `M${px(t)} ${at[levels[i - 1][1]]}V${at[v]}` : `M${px(t) + 0.5} ${at[v]}`;
    return <path key={t} d={`${from}H${px(end) + 0.5}`} stroke={v === "x" ? "#f00" : "#0f0"} />;
  });
};

const Bus = ({ y, bus }) => {
  const top = y + 2.5;
  const low = y + 14.5;
  const d = bus.map(([t], i) => {
    const a = px(t);
    const last = i === bus.length - 1;
    const b = last ? px(END) + 1 : px(bus[i + 1][0]);
    const close = last ? "" : `M${b - 1} ${top}v3M${b - 1} ${low}v-3`;
    return `M${a + 0.5} ${top}H${b - 0.5}M${a + 0.5} ${low}H${b - 0.5}M${a + 1} ${top}v3M${a} ${top + 2.5}V${low - 2.5}M${a + 1} ${low}v-3${close}`;
  }).join("");
  return (
    <>
      {bus[0][0] > 0 && <path d={`M3 ${y + 8.5}H${px(bus[0][0])}`} stroke="#f00" />}
      <path d={d} stroke="#b4ffb4" />
      {bus.filter((b) => b[1]).map(([t, label]) => (
        <text key={t} x={px(t) + 3.5} y={y + 13} fill="#fff">{label}</text>
      ))}
    </>
  );
};

const WaveSvg = styled.svg`
  width: 100%;
  height: ${(p) => p.$h}px;
  background: #000;
  font: 11px ${UI};
`;

const Waves = () => (
  <WaveSvg $h={237} fill="none" shapeRendering="crispEdges" role="img" aria-label="Waveforms">
    <path d={range(100, 3100, 100).map((t) => `M${px(t)} 0V237`).join("")} stroke="#808080" />
    {signals.map((s, i) => {
      const y = 2 + i * 17;
      return (
        <g key={s.name}>
          {s.clock && <path d={clockPath(y)} stroke="#0f0" />}
          {s.levels && <Levels y={y} levels={s.levels} />}
          {s.bus && <Bus y={y} bus={s.bus} />}
        </g>
      );
    })}
  </WaveSvg>
);

const Ruler = () => (
  <WaveSvg $h={22} fill="none" shapeRendering="crispEdges" role="img" aria-label="Time ruler">
    <path d={range(40, 3140, 40).map((t) => `M${px(t)} ${t % 200 ? 3 : 0}V7`).join("")} stroke="#0f0" />
    <text x="2" y="20" fill="#0f0">ps</text>
    {range(400, 2800, 400).map((t) => (
      <text key={t} x={px(t)} y="20" fill="#0f0" textAnchor="middle">{`${t}000 ps`}</text>
    ))}
  </WaveSvg>
);

export default function App() {
  return (
    <>
      <Global />
      <Stipple />
      <Frame>
        <TitleBar>
          <AppIcon />
          <Title>Wave</Title>
          <WindowButton aria-label="Minimize">
            <svg width="10" height="10"><path d="M0 5.500h10" stroke="#000" shapeRendering="crispEdges" /></svg>
          </WindowButton>
          <WindowButton aria-label="Maximize">
            <svg width="10" height="10"><path d="M.5.5h9v9h-9z" stroke="#000" fill="none" /></svg>
          </WindowButton>
          <WindowButton aria-label="Close">
            <svg width="10" height="10"><path d="M0 0l10 10M10 0L0 10" stroke="#000" /></svg>
          </WindowButton>
        </TitleBar>
        <MenuBar>
          {["File", "Edit", "View", "Add", "Format", "Tools", "Bookmarks", "Window", "Help"].map((m) => (
            <MenuItem key={m}>{m}</MenuItem>
          ))}
        </MenuBar>
        <Dock>
          <Caption>
            <AppIcon />
            <CaptionTitle>Wave - Default</CaptionTitle>
            <Groove><GrooveGrip /></Groove>
            <CaptionButton aria-label="Move">
              <svg width="9" height="9" shapeRendering="crispEdges"><path d="M4.500 0v9M0 4.500h9M3 2.500h3M3 6.500h3M2.500 3v3M6.500 3v3" stroke="#000" strokeDasharray="1 1" /></svg>
            </CaptionButton>
            <CaptionButton aria-label="Undock">
              <svg width="9" height="9"><path d="M.5 3.500v5h5v-5zM8.500 0L3 5.500M3 2v4h4" stroke="#000" strokeWidth="1.500" fill="none" /></svg>
            </CaptionButton>
            <CaptionButton aria-label="Close pane">
              <svg width="9" height="9"><path d="M1 1l7 7M8 1L1 8" stroke="#000" strokeWidth="2" /></svg>
            </CaptionButton>
          </Caption>
          <div>
            {rows.map((bars, r) => (
              <ToolRow key={r}>
                {bars.map((bar, b) => (
                  <Tools key={b} $tall={bar.tall} role="toolbar">
                    {bar.items.map((code, i) => <ToolItem key={i} code={code} />)}
                  </Tools>
                ))}
              </ToolRow>
            ))}
          </div>
          <Panes>
            <Pane $w={159}>
              <Cell $h={18} $top={2}>
                <ObjectsIconSlot />
                <DropTool aria-label="Object filter" />
              </Cell>
              <Body $gutter={8} $pad={3}>
                <SignalList>
                  {signals.map((s) => (
                    <Signal key={s.name}>
                      {s.bus ? (
                        <Expander aria-label={`Expand ${s.name}`}>
                          <svg width="5" height="5" shapeRendering="crispEdges"><path d="M0 2.500h5M2.500 0v5" stroke="#000" /></svg>
                        </Expander>
                      ) : <Blank />}
                      <Stem $blank={!s.bus} />
                      <Diamond out={s.out} />
                      <SignalName>{s.name}</SignalName>
                    </Signal>
                  ))}
                </SignalList>
              </Body>
              <Cell $h={22} $bg="#fff" $fg="#000" $end={9}>
                <NowIcons>
                  <svg width="36" height="12" aria-hidden="true">
                    <path d="M1 10l2-6 3 2 2-3 2 7z" fill="#555" stroke="#aaa" />
                    <path d="M13 1.500h9v6h-4l-3 3v-3h-2z" fill="#b8d8f8" stroke="#5890d0" />
                    <circle cx="30" cy="6" r="5" fill="#50a850" stroke="#c8e8c8" />
                    <path d="M30 3.500v5M27.500 6h5" stroke="#fff" strokeWidth="1.500" />
                  </svg>
                </NowIcons>
                Now
              </Cell>
              <HScroll $gutter={8} $idle>
                <ScrollButton disabled aria-label="Scroll left"><Arrow $left /></ScrollButton>
                <Thumb $clear />
                <ScrollButton disabled aria-label="Scroll right"><Arrow $right /></ScrollButton>
              </HScroll>
            </Pane>
            <Pane $w={101}>
              <Cell $h={18} $top={2} $end={5}>Msgs</Cell>
              <Body $pad={2}>
                <SignalList>
                  {signals.map((s) => <Signal key={s.name}>{s.value}</Signal>)}
                </SignalList>
              </Body>
              <Cell $h={22} $bg="#fff" $fg="#000" $end={9}>3000000 ps</Cell>
              <HScroll $idle>
                <ScrollButton disabled aria-label="Scroll left"><Arrow $left /></ScrollButton>
                <Thumb $clear />
                <ScrollButton disabled aria-label="Scroll right"><Arrow $right /></ScrollButton>
              </HScroll>
            </Pane>
            <Pane>
              <Cell $h={18} $bg="#000" />
              <Body $flush>
                <Waves />
              </Body>
              <Cell $h={22} $bg="#000"><Ruler /></Cell>
              <HScroll>
                <ScrollButton aria-label="Scroll left"><Arrow $left /></ScrollButton>
                <Thumb />
                <ScrollButton aria-label="Scroll right"><Arrow $right /></ScrollButton>
              </HScroll>
            </Pane>
            <Pane $w={18} $last>
              <Cell $h={18} />
              <VScroll>
                <ScrollButton aria-label="Scroll up"><Arrow $up /></ScrollButton>
                <Thumb $v />
                <ScrollButton aria-label="Scroll down"><Arrow $down /></ScrollButton>
              </VScroll>
              <Cell $h={22} />
              <Cell $h={18} />
            </Pane>
          </Panes>
          <StatusBar>
            <StatusCell $w={169}>0 ps to 3150 ns</StatusCell>
            <StatusCell />
            <svg width="14" height="20" aria-hidden="true"><path d="M3 19L14 8M7 19l7-7M11 19l3-3" stroke="#808080" /></svg>
          </StatusBar>
        </Dock>
      </Frame>
    </>
  );
}

const ObjectsSlot = styled.span`
  margin: 0 3px 0 10px;
`;
function ObjectsIconSlot() {
  return <ObjectsSlot><ObjectsIcon /></ObjectsSlot>;
}
